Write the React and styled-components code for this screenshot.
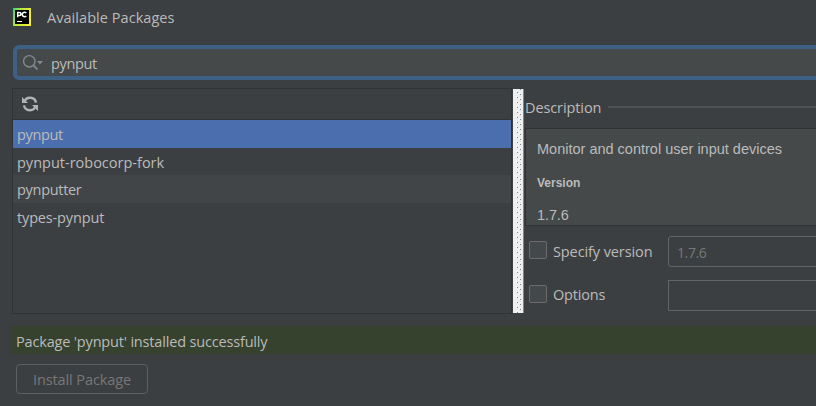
import React from "react";
import styled, { createGlobalStyle } from "styled-components";

const Global = createGlobalStyle`
  * { box-sizing: border-box; }
  html, body { margin: 0; background: #3c3f41; overflow: hidden; }
`;

const Label = styled.span`
  font-family: ${(p) => (p.$arial ? '"Liberation Sans", Arial' : '"Open Sans", "Noto Sans"')}, sans-serif;
  font-size: ${(p) => p.$size || 14.5}px;
  font-weight: ${(p) => (p.$bold ? 700 : 400)};
  letter-spacing: ${(p) => p.$track || 0}px;
  color: ${(p) => p.$color || "#bbbbbb"};
  line-height: 20px;
  white-space: nowrap;
`;

const Dialog = styled.main`
  width: 816px;
  height: 406px;
  overflow: hidden;
  background: #3c3f41;
  display: flex;
  flex-direction: column;
`;

const TitleBar = styled.header`
  height: 45px;
  flex: none;
  padding: 8px 0 0 13px;
  display: flex;
  align-items: flex-start;
  gap: 16px;
`;

const Search = styled.div`
  height: 35px;
  flex: none;
  margin: 0 -10px 0 13px;
  border: 4px solid #3d6185;
  border-radius: 6px;
  background: #45494a;
  display: flex;
  align-items: flex-start;
  padding: 5px 0 0 5px;
  gap: 7px;
`;

const Content = styled.div`
  height: 226px;
  flex: none;
  margin: 8px 0 0 12px;
  display: flex;
`;

const PackagePanel = styled.section`
  width: 500px;
  flex: none;
  border: 1px solid #303234;
  display: flex;
  flex-direction: column;
`;

const Toolbar = styled.div`
  height: 31px;
  border-bottom: 1px solid #303234;
  padding: 7px 0 0 9px;
`;

const PackageRow = styled.div`
  height: ${(p) => p.$height}px;
  padding: 5px 0 0 4px;
  display: flex;
  background: ${(p) => p.$bg || "transparent"};
`;

const Splitter = styled.div`
  width: 12px;
  flex: none;
  margin: 1px 0;
  border-left: 1px solid #3c3f41;
  border-right: 1px solid #7d8790;
  background: #eeeeee;
  overflow: hidden;
`;

const Details = styled.section`
  flex: 1;
  min-width: 0;
  padding-left: 1px;
  display: flex;
  flex-direction: column;
`;

const GroupTitle = styled.div`
  height: 40px;
  flex: none;
  display: flex;
  align-items: center;
  gap: 7px;
  &::after {
    content: "";
    flex: 1;
    height: 2px;
    margin-top: -2px;
    background: #515151;
  }
`;

const Description = styled.div`
  height: 98px;
  flex: none;
  border: 1px solid #323232;
  border-right: 0;
  background: #45494a;
  padding: 10px 0 0 11px;
  display: flex;
  flex-direction: column;
  overflow: hidden;
`;

const Line = styled.div`
  height: ${(p) => p.$height}px;
  flex: none;
  display: flex;
`;

const OptionRow = styled.div`
  height: 31px;
  flex: none;
  margin-top: ${(p) => p.$top}px;
  display: flex;
`;

const Check = styled.i`
  width: 18px;
  height: 18px;
  flex: none;
  margin: 5px 6px 0 4px;
  border: 1px solid #6b6b6b;
  border-radius: 2px;
  background: #43494a;
`;

const OptionLabel = styled.div`
  width: 115px;
  flex: none;
  padding-top: ${(p) => p.$top}px;
  display: flex;
`;

const Field = styled.div`
  flex: 1;
  margin-right: -6px;
  border: 1px solid #646464;
  border-radius: ${(p) => p.$radius}px;
  padding: 6px 0 0 8px;
  display: flex;
`;

const Status = styled.div`
  height: 28px;
  flex: none;
  margin: 12px 0 0 12px;
  padding: 6px 0 0 4px;
  background: #36412e;
  display: flex;
`;

const Button = styled.button`
  width: 132px;
  height: 30px;
  margin: 10px 0 0 16px;
  padding: 2px 0 0;
  border: 1px solid #5e6060;
  border-radius: 4px;
  background: #3c3f41;
  display: flex;
  align-items: center;
  justify-content: center;
`;

const Block = styled.svg`
  display: block;
  flex: none;
`;

const Logo = () => (
  <Block width="18" height="18" viewBox="0 0 18 18">
    <defs>
      <linearGradient id="pc" x1="0" y1="0" x2="1" y2="0.35">
        <stop offset="0" stopColor="#21d789" />
        <stop offset="0.4" stopColor="#b4e93c" />
        <stop offset="1" stopColor="#f4ee32" />
      </linearGradient>
    </defs>
    <path fill="url(#pc)" d="M0 0h18v18H0z" />
    <path fill="#000" d="M2 2h14v14H2z" />
    <path fill="none" stroke="#fff" strokeWidth="1.5" d="M4.7 9.3V4.4h1.8a1.5 1.5 0 0 1 0 3H4.7M13.2 5.1a2.2 2.2 0 1 0 0 2.8" />
    <path fill="#fff" d="M4 13h5v1H4z" />
  </Block>
);

const SearchIcon = () => (
  <Block width="22" height="18" viewBox="0 0 22 18" fill="none" stroke="#7f8b91">
    <circle cx="7.3" cy="7.3" r="5.7" strokeWidth="1.4" />
    <path strokeWidth="1.8" d="m11.4 11.4 4 4" />
    <path fill="#7f8b91" stroke="none" d="M15 7h6l-3 3.4z" />
  </Block>
);

const Refresh = () => (
  <Block width="16" height="16" viewBox="0 0 16 16">
    <g fill="none" stroke="#afb1b3" strokeWidth="2.4">
      <path d="M2.3 6.2A6 6 0 0 1 14 6.6" />
      <path d="M13.7 9.8A6 6 0 0 1 2 9.4" />
    </g>
    <path fill="#afb1b3" d="M0 1v6h6zM16 15V9h-6z" />
  </Block>
);

const Grip = () => (
  <Block width="10" height="224">
    <defs>
      <pattern id="grip" width="10" height="5" patternUnits="userSpaceOnUse">
        <path fill="#7189a0" d="M4 3h1v1H4zM7 0h1v1H7z" />
        <path fill="#fff" d="M3 2h1v1H3zM6 4h1v1H6z" />
      </pattern>
    </defs>
    <path fill="url(#grip)" d="M0 0h10v224H0z" />
  </Block>
);

const packages = [
  { name: "pynput", height: 28, bg: "#4b6eaf", track: -0.35 },
  { name: "pynput-robocorp-fork", height: 27, track: 0 },
  { name: "pynputter", height: 28, bg: "#414547", track: -0.3 },
  { name: "types-pynput", height: 28, track: -0.15 },
];

export default function App() {
  return (
    <>
      <Global />
      <Dialog>
        <TitleBar>
          <Logo />
          <Label $track={0.05}>Available Packages</Label>
        </TitleBar>
        <Search>
          <SearchIcon />
          <Label $track={-0.35}>pynput</Label>
        </Search>
        <Content>
          <PackagePanel>
            <Toolbar><Refresh /></Toolbar>
            {packages.map((p) => (
              <PackageRow key={p.name} $height={p.height} $bg={p.bg}>
                <Label $track={p.track}>{p.name}</Label>
              </PackageRow>
            ))}
          </PackagePanel>
          <Splitter><Grip /></Splitter>
          <Details>
            <GroupTitle><Label $track={-0.1}>Description</Label></GroupTitle>
            <Description>
              <Line $height={34}><Label $arial $size={14.5}>Monitor and control user input devices</Label></Line>
              <Line $height={32}><Label $arial $bold $size={12}>Version</Label></Line>
              <Line $height={20}><Label $arial $size={14.5} $track={-0.1}>1.7.6</Label></Line>
            </Description>
            <OptionRow $top={10}>
              <Check />
              <OptionLabel $top={6}><Label $track={-0.1}>Specify version</Label></OptionLabel>
              <Field $radius={3}><Label $size={14} $track={-0.4} $color="#777777">1.7.6</Label></Field>
            </OptionRow>
            <OptionRow $top={13}>
              <Check />
              <OptionLabel $top={5}><Label $track={-0.2}>Options</Label></OptionLabel>
              <Field $radius={0} />
            </OptionRow>
          </Details>
        </Content>
        <Status><Label $track={-0.17}>Package 'pynput' installed successfully</Label></Status>
        <Button><Label $track={-0.1} $color="#777777">Install Package</Label></Button>
      </Dialog>
    </>
  );
}
